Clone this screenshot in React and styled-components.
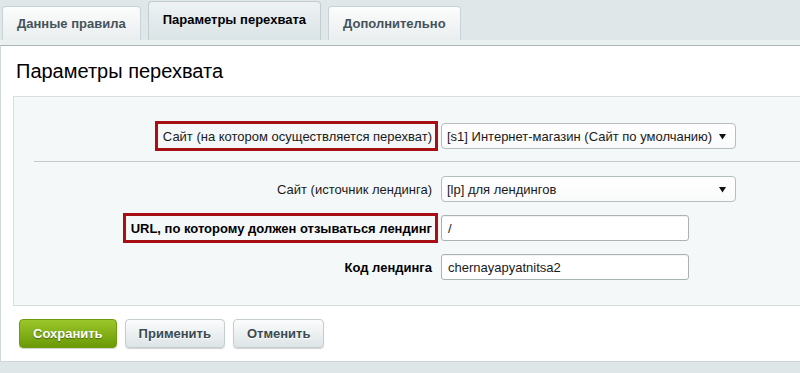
import React from "react";
import styled, { createGlobalStyle } from "styled-components";

const Global = createGlobalStyle`
  html, body { margin: 0; padding: 0; }
  body {
    background: #dfe7e9;
    font-family: "Liberation Sans", Arial, sans-serif;
    font-size: 13px;
    color: #000;
    width: 800px;
    height: 373px;
    overflow: hidden;
  }
`;

const Page = styled.div`
  width: 800px;
  height: 373px;
  display: flex;
  flex-direction: column;
  background: #dfe7e9;
`;

const TabBar = styled.div`
  height: 40px;
  display: flex;
  align-items: flex-end;
  gap: 7px;
  padding-left: 2px;
  border-bottom: 5px solid #eaeff0;
`;

const Tab = styled.div`
  height: ${(p) => (p.$active ? 39 : 34)}px;
  box-sizing: border-box;
  padding: 0 ${(p) => (p.$active ? 14 : 14)}px ${(p) => (p.$active ? 4 : 0)}px;
  display: flex;
  align-items: center;
  font-weight: bold;
  font-size: 13px;
  color: ${(p) => (p.$active ? "#000" : "#45525a")};
  border: 1px solid ${(p) => (p.$active ? "#c2cdd0" : "#c9d2d4")};
  border-bottom: none;
  border-radius: 4px 4px 0 0;
  background: ${(p) =>
    p.$active
      ? "linear-gradient(#eef2f3, #dbe4e6)"
      : "linear-gradient(#fbfcfc, #eaeeef)"};
`;

const Panel = styled.div`
  background: #fff;
  border-top: 1px solid #a9b4b8;
  border-left: 1px solid #cfd8da;
  padding: 14px 0 13px 12px;
  display: flex;
  flex-direction: column;
`;

const Title = styled.h1`
  margin: 0 0 14px 3px;
  font-weight: normal;
  font-size: 20px;
  line-height: 22px;
  color: #000;
`;

const FormBox = styled.div`
  background: #f5f8f9;
  border: 1px solid #d6dee0;
  border-right: none;
  padding: 24px 0 23px 0;
  display: flex;
  flex-direction: column;
`;

const Row = styled.div`
  display: grid;
  grid-template-columns: 424px 1fr;
  column-gap: 3px;
  align-items: center;
  height: 30px;
`;

const Rows = styled.div`
  display: flex;
  flex-direction: column;
  gap: 9px;
`;

const LabelCell = styled.div`
  display: flex;
  justify-content: flex-end;
`;

const Label = styled.div`
  box-sizing: border-box;
  height: 30px;
  display: flex;
  align-items: center;
  padding: 0 3px 0 5px;
  border: 3px solid ${(p) => (p.$marked ? "#a70f14" : "transparent")};
  font-weight: ${(p) => (p.$bold ? "bold" : "normal")};
  color: ${(p) => (p.$bold ? "#000" : "#1a1a1a")};
  white-space: nowrap;
`;

const Separator = styled.div`
  height: 1px;
  background: #c3cacc;
  margin: 10px 0 12px 20px;
`;

const SelectBox = styled.div`
  width: 295px;
  height: 26px;
  box-sizing: border-box;
  border: 1px solid #b4bdc0;
  border-radius: 4px;
  background: linear-gradient(#ffffff, #f9fafa);
  display: flex;
  align-items: center;
  justify-content: space-between;
  padding: 0 9px 0 5px;
  color: #1a1a1a;
  white-space: nowrap;
`;

const TextInput = styled.div`
  width: 248px;
  height: 26px;
  box-sizing: border-box;
  border: 1px solid #a9b2b5;
  border-radius: 3px;
  background: #fff;
  display: flex;
  align-items: center;
  padding: 0 6px;
  color: #1a1a1a;
  box-shadow: inset 0 1px 1px rgba(0,0,0,0.06);
`;

const Arrow = () => (
  <svg width="7" height="7" viewBox="0 0 7 7">
    <path d="M0 1 L7 1 L3.5 6.5 Z" fill="#111" />
  </svg>
);

const Buttons = styled.div`
  display: flex;
  gap: 8px;
  margin: 13px 0 0 6px;
`;

const Button = styled.button`
  height: 29px;
  box-sizing: border-box;
  padding: 0 13px;
  border-radius: 4px;
  font-family: "Liberation Sans", Arial, sans-serif;
  font-size: 13px;
  font-weight: bold;
  cursor: pointer;
  border: 1px solid ${(p) => (p.$primary ? "#6e9a10" : "#c5cdd0")};
  color: ${(p) => (p.$primary ? "#fff" : "#3b4a4f")};
  text-shadow: ${(p) => (p.$primary ? "0 1px 1px rgba(40,60,0,0.6)" : "0 1px 0 #fff")};
  background: ${(p) =>
    p.$primary
      ? "linear-gradient(#9cc72a, #6b9a07)"
      : "linear-gradient(#fbfcfc, #dde4e6)"};
  box-shadow: 0 1px 1px rgba(0, 0, 0, 0.18);
`;

const Footer = styled.div`
  flex: 1;
  background: #dfe6e8;
  border-top: 1px solid #cdd5d7;
`;

export default function App() {
  return (
    <Page>
      <Global />
      <TabBar>
        <Tab>Данные правила</Tab>
        <Tab $active>Параметры перехвата</Tab>
        <Tab>Дополнительно</Tab>
      </TabBar>
      <Panel>
        <Title>Параметры перехвата</Title>
        <FormBox>
          <Row>
            <LabelCell>
              <Label $marked>Сайт (на котором осуществляется перехват)</Label>
            </LabelCell>
            <SelectBox>
              <span>[s1] Интернет-магазин (Сайт по умолчанию)</span>
              <Arrow />
            </SelectBox>
          </Row>
          <Separator />
          <Rows>
            <Row>
              <LabelCell>
                <Label>Сайт (источник лендинга)</Label>
              </LabelCell>
              <SelectBox>
                <span>[lp] для лендингов</span>
                <Arrow />
              </SelectBox>
            </Row>
            <Row>
              <LabelCell>
                <Label $marked $bold>URL, по которому должен отзываться лендинг</Label>
              </LabelCell>
              <TextInput>/</TextInput>
            </Row>
            <Row>
              <LabelCell>
                <Label $bold>Код лендинга</Label>
              </LabelCell>
              <TextInput>chernayapyatnitsa2</TextInput>
            </Row>
          </Rows>
        </FormBox>
        <Buttons>
          <Button $primary>Сохранить</Button>
          <Button>Применить</Button>
          <Button>Отменить</Button>
        </Buttons>
      </Panel>
      <Footer />
    </Page>
  );
}
